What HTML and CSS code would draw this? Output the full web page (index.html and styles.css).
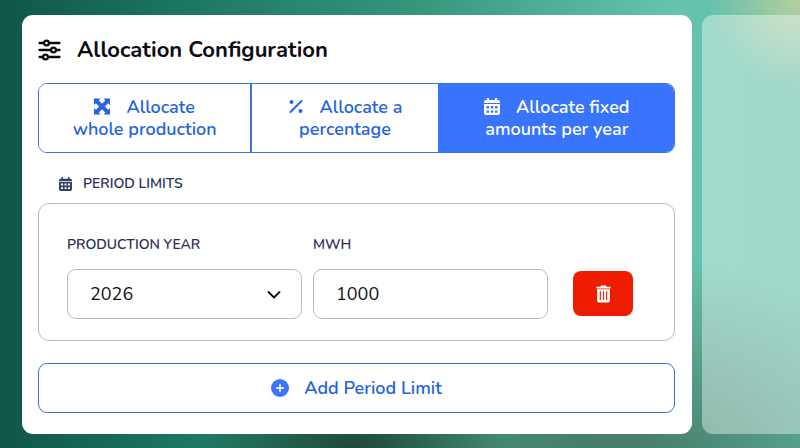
FILE: index.html
```html
<!DOCTYPE html>
<html lang="en">
<head>
  <meta charset="UTF-8" />
  <meta name="viewport" content="width=device-width, initial-scale=1.0" />
  <title>Allocation Configuration</title>
  <link rel="stylesheet" href="styles.css">
</head>
<body>
  <main class="layout">
    <form class="card">
      <h1 class="title">
        <svg class="title-icon" viewBox="0 0 22 22" fill="none" stroke="currentColor" stroke-width="2.300" stroke-linecap="round">
          <path d="M1 4h4M11 4h10M1 11h11M18 11h3M1 18h3M10 18h11" />
          <circle cx="8" cy="4" r="2.400" />
          <circle cx="15" cy="11" r="2.400" />
          <circle cx="7" cy="18" r="2.400" />
        </svg>
        Allocation Configuration
      </h1>

      <div class="tabs">
        <button type="button" class="tab">
          <svg class="icon" viewBox="0 0 16 16" fill="currentColor">
            <path d="M0 0h6.5L4.700 1.900 8 5.200 11.300 1.900 9.500 0H16v6.500l-1.900-1.800L10.800 8l3.300 3.300L16 9.500V16H9.500l1.800-1.900L8 10.800l-3.300 3.300L6.500 16H0V9.500l1.900 1.800L5.200 8 1.900 4.700 0 6.500z" />
          </svg>Allocate<br>whole production
        </button>
        <button type="button" class="tab">
          <svg class="icon" viewBox="0 0 16 16" fill="currentColor">
            <path d="M2.500 13.500l11-11" stroke="currentColor" stroke-width="2" stroke-linecap="round" />
            <circle cx="3.500" cy="3.500" r="2" />
            <circle cx="12.500" cy="12.500" r="2" />
          </svg>Allocate a<br>percentage
        </button>
        <button type="button" class="tab active">
          <svg class="icon" viewBox="0 0 16 17" fill="currentColor">
            <use href="#calendar" />
          </svg>Allocate fixed<br>amounts per year
        </button>
      </div>

      <h2 class="section-label">
        <svg class="label-icon" viewBox="0 0 16 17" fill="currentColor">
          <path id="calendar" fill-rule="evenodd" d="M3 0h2v2h6V0h2v2h1q2 0 2 2v1H0V4q0-2 2-2h1zM0 6h16v9q0 2-2 2H2q-2 0-2-2zM2.500 8v2.400h2.500V8zM6.800 8v2.400h2.500V8zM11 8v2.400h2.500V8zM2.500 12.400v2.400h2.500v-2.400zM6.800 12.400v2.400h2.500v-2.400zM11 12.400v2.400h2.500v-2.400z" />
        </svg>
        PERIOD LIMITS
      </h2>

      <div class="limit">
        <div class="field">
          <label for="year">PRODUCTION YEAR</label>
          <div class="select-wrap">
            <select id="year" class="control">
              <option>2026</option>
            </select>
            <svg class="chevron" viewBox="0 0 14 14" fill="none" stroke="currentColor" stroke-width="1.800" stroke-linecap="round" stroke-linejoin="round">
              <path d="M1.500 5L7 10.500 12.500 5" />
            </svg>
          </div>
        </div>
        <div class="field">
          <label for="mwh">MWH</label>
          <input type="text" id="mwh" class="control" value="1000" />
        </div>
        <button type="button" class="delete" aria-label="Delete period limit">
          <svg class="trash" viewBox="0 0 16 18" fill="currentColor">
            <path d="M5.500 0h5l.8 1.200H15q.8 0 .8.900t-.8.900H1q-.8 0-.8-.9t.8-.9h3.700z" />
            <path fill-rule="evenodd" d="M1.200 4h13.600v12q0 2-2 2H3.200q-2 0-2-2zM4 6v9.500h1.200V6zM7.400 6v9.500h1.200V6zM10.800 6v9.500H12V6z" />
          </svg>
        </button>
      </div>

      <button type="button" class="add">
        <svg class="add-icon" viewBox="0 0 18 18">
          <circle cx="9" cy="9" r="9" fill="#3874fc" />
          <path d="M9 5.500v7M5.500 9h7" stroke="#fff" stroke-width="1.500" stroke-linecap="round" />
        </svg>
        Add Period Limit
      </button>
    </form>

    <aside class="side-panel"></aside>
  </main>
</body>
</html>
```

FILE: styles.css
```css
* {
  box-sizing: border-box;
  font-family: 'Nunito', 'Lato', sans-serif;
}
body {
  margin: 0;
  min-height: 100vh;
  background:
    radial-gradient(circle at 100% 0, #b5cf9f 0, rgba(140, 200, 165, 0) 10%),
    radial-gradient(ellipse at 44% 105%, #1d4032 0, rgba(29, 64, 50, 0) 24%),
    radial-gradient(ellipse at 78% 108%, #41705f 0, rgba(65, 112, 95, 0) 34%),
    linear-gradient(to right, #105648 0, #1b7561 22%, #36967c 52%, #66c4ae 84%, #62bda8 100%);
}
.layout {
  display: grid;
  grid-template-columns: minmax(0, 1fr) 98px;
  gap: 10px;
  padding: 15px 0 14px 22px;
}
.card {
  padding: 20px 17px 21px 16px;
  background: #fff;
  border-radius: 11px;
}
.side-panel {
  background: rgba(255, 255, 255, 0.4);
  border-radius: 11px 0 0 11px;
}
.title {
  display: flex;
  align-items: center;
  gap: 16px;
  margin: 0 0 18px;
  color: #0b0b12;
  font-size: 22px;
  font-weight: 700;
  line-height: 30px;
}
.title-icon {
  width: 23px;
  height: 22px;
}
.tabs {
  display: grid;
  grid-template-columns: 211fr 187fr 236fr;
  border: 1px solid #3b73d8;
  border-radius: 9px;
  overflow: hidden;
}
.tab {
  padding: 12px 8px;
  background: #fff;
  border: none;
  color: #2563e0;
  font-size: 18px;
  font-weight: 600;
  line-height: 22px;
  cursor: pointer;
}
.tab + .tab {
  border-left: 2px solid #3b73d8;
}
.tab.active {
  background: #3874fc;
  border-color: #3874fc;
  color: #fff;
}
.icon {
  width: 16px;
  height: 17px;
  margin-right: 16px;
  vertical-align: -2px;
}
.section-label {
  display: flex;
  align-items: center;
  gap: 11px;
  margin: 21px 0 9px;
  padding-left: 21px;
}
.label-icon {
  width: 13px;
  height: 14px;
  color: #33416b;
}
.section-label,
.field label {
  color: #2b2e56;
  font-size: 14px;
  font-weight: 600;
  line-height: 20px;
}
.limit {
  display: grid;
  grid-template-columns: 1fr 1fr 74px;
  gap: 11px;
  align-items: end;
  padding: 31px 41px 21px 28px;
  border: 1px solid #bbb;
  border-radius: 11px;
}
.field {
  display: flex;
  flex-direction: column;
  gap: 14px;
}
.select-wrap {
  position: relative;
}
.control {
  display: block;
  width: 100%;
  height: 50px;
  padding: 0 22px;
  background: #fff;
  border: 1px solid #bbb;
  border-radius: 9px;
  color: #111;
  font-size: 18px;
  appearance: none;
}
.chevron {
  position: absolute;
  top: 18px;
  right: 21px;
  width: 14px;
  height: 14px;
  color: #111;
  pointer-events: none;
}
.delete {
  display: flex;
  align-items: center;
  justify-content: center;
  height: 45px;
  margin: 0 0 3px 14px;
  padding: 0;
  background: #ee1c00;
  border: none;
  border-radius: 8px;
  color: #fff;
  cursor: pointer;
}
.trash {
  width: 15px;
  height: 18px;
}
.add {
  display: flex;
  align-items: center;
  justify-content: center;
  gap: 15px;
  width: 100%;
  height: 50px;
  margin-top: 22px;
  background: #fff;
  border: 1px solid #3b73d8;
  border-radius: 9px;
  color: #2563e0;
  font-size: 18px;
  font-weight: 600;
  cursor: pointer;
}
.add-icon {
  width: 18px;
  height: 18px;
}
```
